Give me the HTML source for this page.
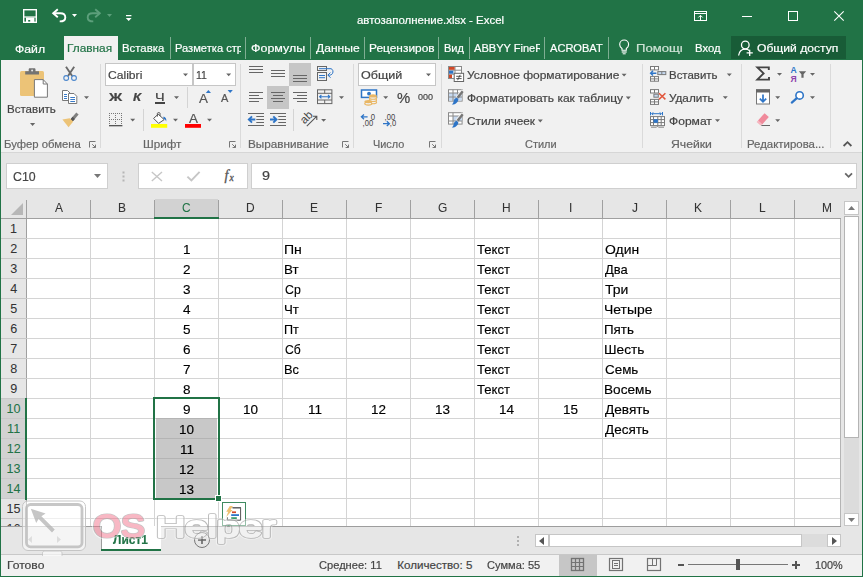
<!DOCTYPE html>
<html lang="ru"><head><meta charset="utf-8"><title>автозаполнение.xlsx - Excel</title><style>html,body{margin:0;padding:0}
body{width:863px;height:577px;overflow:hidden;position:relative;background:#fff;font-family:"Liberation Sans",sans-serif}
.a{position:absolute;display:block}
.t{position:absolute;white-space:nowrap;transform-origin:0 0;-webkit-text-stroke:0.2px}
</style></head><body>
<div class="a" style="left:0px;top:0px;width:863px;height:60px;background:#217346;"></div>
<span class="t" style="left:356.84px;top:13.98px;font-size:11.6px;line-height:11.6px;color:#fff;transform:scaleX(0.9883);">автозаполнение.xlsx - Excel</span>
<div class="a" style="left:64px;top:36px;width:54px;height:24px;background:#f1f1f1;"></div>
<span class="t" style="left:15.43px;top:42.98px;font-size:11.6px;line-height:11.6px;color:#fff;transform:scaleX(1.0559);">Файл</span>
<span class="t" style="left:67.25px;top:41.78px;font-size:11.6px;line-height:11.6px;color:#217346;transform:scaleX(1.0222);">Главная</span>
<span class="t" style="left:122.39px;top:41.78px;font-size:11.6px;line-height:11.6px;color:#fff;transform:scaleX(0.9795);">Вставка</span>
<div class="a" style="left:170px;top:38px;width:71px;height:20px;overflow:hidden">
<span class="t" style="left:4.51px;top:3.78px;font-size:11.6px;line-height:11.6px;color:#fff;transform:scaleX(0.9600);">Разметка страницы</span>
</div>
<span class="t" style="left:251.11px;top:41.78px;font-size:11.6px;line-height:11.6px;color:#fff;transform:scaleX(1.0740);">Формулы</span>
<span class="t" style="left:315.94px;top:41.78px;font-size:11.6px;line-height:11.6px;color:#fff;transform:scaleX(1.0413);">Данные</span>
<span class="t" style="left:368.75px;top:41.78px;font-size:11.6px;line-height:11.6px;color:#fff;transform:scaleX(1.0268);">Рецензиров</span>
<span class="t" style="left:443.72px;top:41.78px;font-size:11.6px;line-height:11.6px;color:#fff;transform:scaleX(0.9528);">Вид</span>
<div class="a" style="left:470px;top:38px;width:70.3px;height:20px;overflow:hidden">
<span class="t" style="left:4.20px;top:3.78px;font-size:11.6px;line-height:11.6px;color:#fff;transform:scaleX(0.9538);">ABBYY FineReader</span>
</div>
<span class="t" style="left:550.00px;top:41.78px;font-size:11.6px;line-height:11.6px;color:#fff;transform:scaleX(0.9548);">ACROBAT</span>
<div class="a" style="left:630px;top:38px;width:52.3px;height:20px;overflow:hidden">
<span class="t" style="left:6.05px;top:3.78px;font-size:11.6px;line-height:11.6px;color:#cfe3d6;transform:scaleX(1.1281);">Помощник</span>
</div>
<span class="t" style="left:695.29px;top:41.78px;font-size:11.6px;line-height:11.6px;color:#fff;transform:scaleX(0.9756);">Вход</span>
<div class="a" style="left:731px;top:36px;width:115px;height:23px;background:#185c37;"></div>
<span class="t" style="left:757.15px;top:41.78px;font-size:11.6px;line-height:11.6px;color:#fff;transform:scaleX(1.0441);">Общий доступ</span>
<div class="a" style="left:170px;top:37px;width:1px;height:22px;background:#7fae93;"></div>
<div class="a" style="left:245px;top:37px;width:1px;height:22px;background:#7fae93;"></div>
<div class="a" style="left:310px;top:37px;width:1px;height:22px;background:#7fae93;"></div>
<div class="a" style="left:364px;top:37px;width:1px;height:22px;background:#7fae93;"></div>
<div class="a" style="left:438px;top:37px;width:1px;height:22px;background:#7fae93;"></div>
<div class="a" style="left:469px;top:37px;width:1px;height:22px;background:#7fae93;"></div>
<div class="a" style="left:544px;top:37px;width:1px;height:22px;background:#7fae93;"></div>
<div class="a" style="left:608px;top:37px;width:1px;height:22px;background:#7fae93;"></div>
<div class="a" style="left:1px;top:60px;width:861px;height:92px;background:#f1f1f1;"></div>
<div class="a" style="left:1px;top:152px;width:861px;height:1px;background:#d6d6d6;"></div>
<div class="a" style="left:1px;top:153px;width:861px;height:45px;background:#e6e6e6;"></div>
<div class="a" style="left:100px;top:64px;width:1px;height:84px;background:#dadada;"></div>
<div class="a" style="left:240px;top:64px;width:1px;height:84px;background:#dadada;"></div>
<div class="a" style="left:353px;top:64px;width:1px;height:84px;background:#dadada;"></div>
<div class="a" style="left:441px;top:64px;width:1px;height:84px;background:#dadada;"></div>
<div class="a" style="left:642px;top:64px;width:1px;height:84px;background:#dadada;"></div>
<div class="a" style="left:741px;top:64px;width:1px;height:84px;background:#dadada;"></div>
<div class="a" style="left:830px;top:64px;width:1px;height:84px;background:#dadada;"></div>
<div class="a" style="left:187px;top:87px;width:1px;height:21px;background:#d4d4d4;"></div>
<div class="a" style="left:143px;top:109px;width:1px;height:22px;background:#d4d4d4;"></div>
<div class="a" style="left:293px;top:109px;width:1px;height:22px;background:#d4d4d4;"></div>
<span class="t" style="left:3.59px;top:138.48px;font-size:11.6px;line-height:11.6px;color:#666;transform:scaleX(0.9757);">Буфер обмена</span>
<span class="t" style="left:142.76px;top:138.48px;font-size:11.6px;line-height:11.6px;color:#666;transform:scaleX(1.0080);">Шрифт</span>
<span class="t" style="left:248.26px;top:138.48px;font-size:11.6px;line-height:11.6px;color:#666;transform:scaleX(1.0120);">Выравнивание</span>
<span class="t" style="left:373.13px;top:138.48px;font-size:11.6px;line-height:11.6px;color:#666;transform:scaleX(0.9387);">Число</span>
<span class="t" style="left:525.15px;top:138.48px;font-size:11.6px;line-height:11.6px;color:#666;transform:scaleX(0.9464);">Стили</span>
<span class="t" style="left:671.39px;top:138.48px;font-size:11.6px;line-height:11.6px;color:#666;transform:scaleX(1.0526);">Ячейки</span>
<span class="t" style="left:746.59px;top:138.48px;font-size:11.6px;line-height:11.6px;color:#666;transform:scaleX(0.9847);">Редактирова...</span>
<span class="t" style="left:7.08px;top:103.18px;font-size:11.6px;line-height:11.6px;color:#444;transform:scaleX(0.9939);">Вставить</span>
<div class="a" style="left:105px;top:63px;width:88px;height:23px;background:#fff;border:1px solid #c6c6c6;box-sizing:border-box;"></div>
<div class="a" style="left:193px;top:63px;width:43px;height:23px;background:#fff;border:1px solid #c6c6c6;box-sizing:border-box;"></div>
<span class="t" style="left:107.89px;top:68.98px;font-size:11.6px;line-height:11.6px;color:#444;transform:scaleX(1.0446);">Calibri</span>
<span class="t" style="left:196.21px;top:68.98px;font-size:11.6px;line-height:11.6px;color:#444;transform:scaleX(0.9045);">11</span>
<div class="a" style="left:358px;top:63px;width:78px;height:23px;background:#fff;border:1px solid #c6c6c6;box-sizing:border-box;"></div>
<span class="t" style="left:361.23px;top:69.08px;font-size:11.6px;line-height:11.6px;color:#444;transform:scaleX(1.0834);">Общий</span>
<div class="a" style="left:289px;top:63px;width:22px;height:23px;background:#c6c6c6;"></div>
<div class="a" style="left:267px;top:86px;width:22px;height:23px;background:#c6c6c6;"></div>
<span class="t" style="left:467.14px;top:68.98px;font-size:11.6px;line-height:11.6px;color:#444;transform:scaleX(1.0328);">Условное форматирование</span>
<span class="t" style="left:466.84px;top:91.68px;font-size:11.6px;line-height:11.6px;color:#444;transform:scaleX(1.0347);">Форматировать как таблицу</span>
<span class="t" style="left:466.91px;top:114.78px;font-size:11.6px;line-height:11.6px;color:#444;transform:scaleX(1.0164);">Стили ячеек</span>
<span class="t" style="left:668.68px;top:68.88px;font-size:11.6px;line-height:11.6px;color:#444;transform:scaleX(0.9876);">Вставить</span>
<span class="t" style="left:668.65px;top:91.78px;font-size:11.6px;line-height:11.6px;color:#444;transform:scaleX(1.0105);">Удалить</span>
<span class="t" style="left:668.94px;top:114.68px;font-size:11.6px;line-height:11.6px;color:#444;transform:scaleX(1.0404);">Формат</span>
<span class="t" style="left:109.30px;top:90.88px;font-size:11.6px;line-height:11.6px;color:#444;transform:scaleX(1.2599);font-weight:bold;">Ж</span>
<span class="t" style="left:132.54px;top:90.88px;font-size:11.6px;line-height:11.6px;color:#444;transform:scaleX(1.1406);font-weight:bold;font-style:italic;">К</span>
<span class="t" style="left:155.14px;top:90.58px;font-size:11.6px;line-height:11.6px;color:#444;transform:scaleX(1.2462);">Ч</span>
<div class="a" style="left:155px;top:102px;width:10px;height:1.5px;background:#444;"></div>
<span class="t" style="left:198.50px;top:91.50px;font-size:13px;line-height:13px;color:#555;transform:scaleX(1.0295);">A</span>
<span class="t" style="left:221.20px;top:94.03px;font-size:10px;line-height:10px;color:#555;transform:scaleX(1.0977);">A</span>
<span class="t" style="left:188.80px;top:112.72px;font-size:12.5px;line-height:12.5px;color:#555;transform:scaleX(1.0707);">A</span>
<span class="t" style="left:396.78px;top:90.00px;font-size:15px;line-height:15px;color:#444;transform:scaleX(0.9919);">%</span>
<span class="t" style="left:417.54px;top:91.67px;font-size:9.6px;line-height:9.6px;color:#444;transform:scaleX(0.9368);">000</span>
<div class="a" style="left:6px;top:163px;width:102px;height:26px;background:#fff;border:1px solid #cfcfcf;box-sizing:border-box;"></div>
<div class="a" style="left:138px;top:163px;width:110px;height:26px;background:#fff;border:1px solid #cfcfcf;box-sizing:border-box;"></div>
<div class="a" style="left:251px;top:163px;width:606px;height:26px;background:#fff;border:1px solid #cfcfcf;box-sizing:border-box;"></div>
<span class="t" style="left:12.58px;top:170.00px;font-size:13px;line-height:13px;color:#444;transform:scaleX(0.9495);">C10</span>
<span class="t" style="left:262.45px;top:169.92px;font-size:12.5px;line-height:12.5px;color:#444;transform:scaleX(1.1527);">9</span>
<svg class="a" style="left:94px;top:173.5px;" width="7" height="4" viewBox="0 0 7 4"><path d="M0 0H7 L3.5 4 Z" fill="#777"/></svg>
<div class="a" style="left:1px;top:198px;width:842px;height:21px;background:#e6e6e6;"></div>
<div class="a" style="left:27px;top:219px;width:814px;height:307px;background:#fff;"></div>
<div class="a" style="left:1px;top:219px;width:25px;height:307px;background:#e6e6e6;"></div>
<div class="a" style="left:155px;top:199px;width:63px;height:18px;background:#d2d2d2;"></div>
<div class="a" style="left:1px;top:399px;width:24px;height:100px;background:#d2d2d2;"></div>
<div class="a" style="left:26px;top:219px;width:1px;height:307px;background:#a0a0a0;"></div>
<div class="a" style="left:26px;top:200px;width:1px;height:18px;background:#a0a0a0;"></div>
<div class="a" style="left:90px;top:219px;width:1px;height:307px;background:#d4d4d4;"></div>
<div class="a" style="left:90px;top:200px;width:1px;height:18px;background:#a0a0a0;"></div>
<div class="a" style="left:154px;top:219px;width:1px;height:307px;background:#d4d4d4;"></div>
<div class="a" style="left:154px;top:200px;width:1px;height:18px;background:#a0a0a0;"></div>
<div class="a" style="left:218px;top:219px;width:1px;height:307px;background:#d4d4d4;"></div>
<div class="a" style="left:218px;top:200px;width:1px;height:18px;background:#a0a0a0;"></div>
<div class="a" style="left:282px;top:219px;width:1px;height:307px;background:#d4d4d4;"></div>
<div class="a" style="left:282px;top:200px;width:1px;height:18px;background:#a0a0a0;"></div>
<div class="a" style="left:346px;top:219px;width:1px;height:307px;background:#d4d4d4;"></div>
<div class="a" style="left:346px;top:200px;width:1px;height:18px;background:#a0a0a0;"></div>
<div class="a" style="left:410px;top:219px;width:1px;height:307px;background:#d4d4d4;"></div>
<div class="a" style="left:410px;top:200px;width:1px;height:18px;background:#a0a0a0;"></div>
<div class="a" style="left:474px;top:219px;width:1px;height:307px;background:#d4d4d4;"></div>
<div class="a" style="left:474px;top:200px;width:1px;height:18px;background:#a0a0a0;"></div>
<div class="a" style="left:538px;top:219px;width:1px;height:307px;background:#d4d4d4;"></div>
<div class="a" style="left:538px;top:200px;width:1px;height:18px;background:#a0a0a0;"></div>
<div class="a" style="left:602px;top:219px;width:1px;height:307px;background:#d4d4d4;"></div>
<div class="a" style="left:602px;top:200px;width:1px;height:18px;background:#a0a0a0;"></div>
<div class="a" style="left:666px;top:219px;width:1px;height:307px;background:#d4d4d4;"></div>
<div class="a" style="left:666px;top:200px;width:1px;height:18px;background:#a0a0a0;"></div>
<div class="a" style="left:730px;top:219px;width:1px;height:307px;background:#d4d4d4;"></div>
<div class="a" style="left:730px;top:200px;width:1px;height:18px;background:#a0a0a0;"></div>
<div class="a" style="left:794px;top:219px;width:1px;height:307px;background:#d4d4d4;"></div>
<div class="a" style="left:794px;top:200px;width:1px;height:18px;background:#a0a0a0;"></div>
<div class="a" style="left:1px;top:218px;width:840px;height:1px;background:#a0a0a0;"></div>
<div class="a" style="left:1px;top:238px;width:26px;height:1px;background:#c8c8c8;"></div>
<div class="a" style="left:27px;top:238px;width:814px;height:1px;background:#d4d4d4;"></div>
<div class="a" style="left:1px;top:258px;width:26px;height:1px;background:#c8c8c8;"></div>
<div class="a" style="left:27px;top:258px;width:814px;height:1px;background:#d4d4d4;"></div>
<div class="a" style="left:1px;top:278px;width:26px;height:1px;background:#c8c8c8;"></div>
<div class="a" style="left:27px;top:278px;width:814px;height:1px;background:#d4d4d4;"></div>
<div class="a" style="left:1px;top:298px;width:26px;height:1px;background:#c8c8c8;"></div>
<div class="a" style="left:27px;top:298px;width:814px;height:1px;background:#d4d4d4;"></div>
<div class="a" style="left:1px;top:318px;width:26px;height:1px;background:#c8c8c8;"></div>
<div class="a" style="left:27px;top:318px;width:814px;height:1px;background:#d4d4d4;"></div>
<div class="a" style="left:1px;top:338px;width:26px;height:1px;background:#c8c8c8;"></div>
<div class="a" style="left:27px;top:338px;width:814px;height:1px;background:#d4d4d4;"></div>
<div class="a" style="left:1px;top:358px;width:26px;height:1px;background:#c8c8c8;"></div>
<div class="a" style="left:27px;top:358px;width:814px;height:1px;background:#d4d4d4;"></div>
<div class="a" style="left:1px;top:378px;width:26px;height:1px;background:#c8c8c8;"></div>
<div class="a" style="left:27px;top:378px;width:814px;height:1px;background:#d4d4d4;"></div>
<div class="a" style="left:1px;top:398px;width:26px;height:1px;background:#c8c8c8;"></div>
<div class="a" style="left:27px;top:398px;width:814px;height:1px;background:#d4d4d4;"></div>
<div class="a" style="left:1px;top:418px;width:26px;height:1px;background:#c8c8c8;"></div>
<div class="a" style="left:27px;top:418px;width:814px;height:1px;background:#d4d4d4;"></div>
<div class="a" style="left:1px;top:438px;width:26px;height:1px;background:#c8c8c8;"></div>
<div class="a" style="left:27px;top:438px;width:814px;height:1px;background:#d4d4d4;"></div>
<div class="a" style="left:1px;top:458px;width:26px;height:1px;background:#c8c8c8;"></div>
<div class="a" style="left:27px;top:458px;width:814px;height:1px;background:#d4d4d4;"></div>
<div class="a" style="left:1px;top:478px;width:26px;height:1px;background:#c8c8c8;"></div>
<div class="a" style="left:27px;top:478px;width:814px;height:1px;background:#d4d4d4;"></div>
<div class="a" style="left:1px;top:498px;width:26px;height:1px;background:#c8c8c8;"></div>
<div class="a" style="left:27px;top:498px;width:814px;height:1px;background:#d4d4d4;"></div>
<div class="a" style="left:1px;top:518px;width:26px;height:1px;background:#c8c8c8;"></div>
<div class="a" style="left:27px;top:518px;width:814px;height:1px;background:#d4d4d4;"></div>
<div class="a" style="left:25px;top:398px;width:2px;height:102px;background:#217346;"></div>
<div class="a" style="left:154px;top:217px;width:65px;height:2px;background:#217346;"></div>
<span class="t" style="left:54.52px;top:202.33px;font-size:12.6px;line-height:12.6px;color:#333;transform:scaleX(0.9500);-webkit-text-stroke:0.05px;">A</span>
<span class="t" style="left:118.34px;top:202.33px;font-size:12.6px;line-height:12.6px;color:#333;transform:scaleX(0.9500);-webkit-text-stroke:0.05px;">B</span>
<span class="t" style="left:182.10px;top:202.33px;font-size:12.6px;line-height:12.6px;color:#217346;transform:scaleX(0.9500);-webkit-text-stroke:0.05px;">C</span>
<span class="t" style="left:245.98px;top:202.33px;font-size:12.6px;line-height:12.6px;color:#333;transform:scaleX(0.9500);-webkit-text-stroke:0.05px;">D</span>
<span class="t" style="left:310.28px;top:202.33px;font-size:12.6px;line-height:12.6px;color:#333;transform:scaleX(0.9500);-webkit-text-stroke:0.05px;">E</span>
<span class="t" style="left:374.61px;top:202.33px;font-size:12.6px;line-height:12.6px;color:#333;transform:scaleX(0.9500);-webkit-text-stroke:0.05px;">F</span>
<span class="t" style="left:437.98px;top:202.33px;font-size:12.6px;line-height:12.6px;color:#333;transform:scaleX(0.9500);-webkit-text-stroke:0.05px;">G</span>
<span class="t" style="left:502.19px;top:202.33px;font-size:12.6px;line-height:12.6px;color:#333;transform:scaleX(0.9500);-webkit-text-stroke:0.05px;">H</span>
<span class="t" style="left:568.85px;top:202.33px;font-size:12.6px;line-height:12.6px;color:#333;transform:scaleX(0.9500);-webkit-text-stroke:0.05px;">I</span>
<span class="t" style="left:631.87px;top:202.33px;font-size:12.6px;line-height:12.6px;color:#333;transform:scaleX(0.9500);-webkit-text-stroke:0.05px;">J</span>
<span class="t" style="left:694.10px;top:202.33px;font-size:12.6px;line-height:12.6px;color:#333;transform:scaleX(0.9500);-webkit-text-stroke:0.05px;">K</span>
<span class="t" style="left:758.88px;top:202.33px;font-size:12.6px;line-height:12.6px;color:#333;transform:scaleX(0.9500);-webkit-text-stroke:0.05px;">L</span>
<span class="t" style="left:822.03px;top:202.33px;font-size:12.6px;line-height:12.6px;color:#333;transform:scaleX(0.9500);-webkit-text-stroke:0.05px;">M</span>
<div class="a" style="left:0;top:219px;width:27px;height:307px;overflow:hidden">
<span class="t" style="left:10.11px;top:4.03px;font-size:12.6px;line-height:12.6px;color:#333;-webkit-text-stroke:0.05px;">1</span>
<span class="t" style="left:10.30px;top:24.03px;font-size:12.6px;line-height:12.6px;color:#333;-webkit-text-stroke:0.05px;">2</span>
<span class="t" style="left:10.30px;top:44.03px;font-size:12.6px;line-height:12.6px;color:#333;-webkit-text-stroke:0.05px;">3</span>
<span class="t" style="left:10.37px;top:64.03px;font-size:12.6px;line-height:12.6px;color:#333;-webkit-text-stroke:0.05px;">4</span>
<span class="t" style="left:10.30px;top:84.03px;font-size:12.6px;line-height:12.6px;color:#333;-webkit-text-stroke:0.05px;">5</span>
<span class="t" style="left:10.24px;top:104.03px;font-size:12.6px;line-height:12.6px;color:#333;-webkit-text-stroke:0.05px;">6</span>
<span class="t" style="left:10.30px;top:124.03px;font-size:12.6px;line-height:12.6px;color:#333;-webkit-text-stroke:0.05px;">7</span>
<span class="t" style="left:10.27px;top:144.03px;font-size:12.6px;line-height:12.6px;color:#333;-webkit-text-stroke:0.05px;">8</span>
<span class="t" style="left:10.30px;top:164.03px;font-size:12.6px;line-height:12.6px;color:#333;-webkit-text-stroke:0.05px;">9</span>
<span class="t" style="left:6.56px;top:184.03px;font-size:12.6px;line-height:12.6px;color:#217346;-webkit-text-stroke:0.05px;">10</span>
<span class="t" style="left:7.09px;top:204.03px;font-size:12.6px;line-height:12.6px;color:#217346;-webkit-text-stroke:0.05px;">11</span>
<span class="t" style="left:6.65px;top:224.03px;font-size:12.6px;line-height:12.6px;color:#217346;-webkit-text-stroke:0.05px;">12</span>
<span class="t" style="left:6.59px;top:244.03px;font-size:12.6px;line-height:12.6px;color:#217346;-webkit-text-stroke:0.05px;">13</span>
<span class="t" style="left:6.52px;top:264.03px;font-size:12.6px;line-height:12.6px;color:#217346;-webkit-text-stroke:0.05px;">14</span>
<span class="t" style="left:6.59px;top:284.03px;font-size:12.6px;line-height:12.6px;color:#333;-webkit-text-stroke:0.05px;">15</span>
<span class="t" style="left:6.59px;top:304.03px;font-size:12.6px;line-height:12.6px;color:#333;-webkit-text-stroke:0.05px;">16</span>
</div>
<svg class="a" style="left:11px;top:203px;" width="12" height="12" viewBox="0 0 12 12"><path d="M12 0V12H0Z" fill="#b7b7b7"/></svg>
<div class="a" style="left:156px;top:419px;width:61px;height:79px;background:#c8c8c8;"></div>
<div class="a" style="left:156px;top:418px;width:61px;height:1px;background:#b4b4b4;"></div>
<div class="a" style="left:156px;top:438px;width:61px;height:1px;background:#b4b4b4;"></div>
<div class="a" style="left:156px;top:458px;width:61px;height:1px;background:#b4b4b4;"></div>
<div class="a" style="left:156px;top:478px;width:61px;height:1px;background:#b4b4b4;"></div>
<div class="a" style="left:153px;top:397px;width:67px;height:103px;border:2px solid #217346;box-sizing:border-box;"></div>
<div class="a" style="left:215px;top:495px;width:7px;height:7px;background:#fff;"></div>
<div class="a" style="left:216px;top:496px;width:5px;height:5px;background:#217346;"></div>
<span class="t" style="left:182.75px;top:242.70px;font-size:13px;line-height:13px;color:#000;transform:scaleX(1.0400);-webkit-text-stroke:0.15px #000;">1</span>
<span class="t" style="left:182.95px;top:262.70px;font-size:13px;line-height:13px;color:#000;transform:scaleX(1.0400);-webkit-text-stroke:0.15px #000;">2</span>
<span class="t" style="left:182.95px;top:282.70px;font-size:13px;line-height:13px;color:#000;transform:scaleX(1.0400);-webkit-text-stroke:0.15px #000;">3</span>
<span class="t" style="left:183.02px;top:302.70px;font-size:13px;line-height:13px;color:#000;transform:scaleX(1.0400);-webkit-text-stroke:0.15px #000;">4</span>
<span class="t" style="left:182.95px;top:322.70px;font-size:13px;line-height:13px;color:#000;transform:scaleX(1.0400);-webkit-text-stroke:0.15px #000;">5</span>
<span class="t" style="left:182.88px;top:342.70px;font-size:13px;line-height:13px;color:#000;transform:scaleX(1.0400);-webkit-text-stroke:0.15px #000;">6</span>
<span class="t" style="left:182.95px;top:362.70px;font-size:13px;line-height:13px;color:#000;transform:scaleX(1.0400);-webkit-text-stroke:0.15px #000;">7</span>
<span class="t" style="left:182.91px;top:382.70px;font-size:13px;line-height:13px;color:#000;transform:scaleX(1.0400);-webkit-text-stroke:0.15px #000;">8</span>
<span class="t" style="left:182.95px;top:402.70px;font-size:13px;line-height:13px;color:#000;transform:scaleX(1.0400);-webkit-text-stroke:0.15px #000;">9</span>
<span class="t" style="left:178.93px;top:422.70px;font-size:13px;line-height:13px;color:#000;transform:scaleX(1.0400);-webkit-text-stroke:0.15px #000;">10</span>
<span class="t" style="left:179.50px;top:442.70px;font-size:13px;line-height:13px;color:#000;transform:scaleX(1.0400);-webkit-text-stroke:0.15px #000;">11</span>
<span class="t" style="left:179.03px;top:462.70px;font-size:13px;line-height:13px;color:#000;transform:scaleX(1.0400);-webkit-text-stroke:0.15px #000;">12</span>
<span class="t" style="left:178.96px;top:482.70px;font-size:13px;line-height:13px;color:#000;transform:scaleX(1.0400);-webkit-text-stroke:0.15px #000;">13</span>
<span class="t" style="left:242.93px;top:402.70px;font-size:13px;line-height:13px;color:#000;transform:scaleX(1.0400);-webkit-text-stroke:0.15px #000;">10</span>
<span class="t" style="left:307.50px;top:402.70px;font-size:13px;line-height:13px;color:#000;transform:scaleX(1.0400);-webkit-text-stroke:0.15px #000;">11</span>
<span class="t" style="left:371.03px;top:402.70px;font-size:13px;line-height:13px;color:#000;transform:scaleX(1.0400);-webkit-text-stroke:0.15px #000;">12</span>
<span class="t" style="left:434.96px;top:402.70px;font-size:13px;line-height:13px;color:#000;transform:scaleX(1.0400);-webkit-text-stroke:0.15px #000;">13</span>
<span class="t" style="left:498.89px;top:402.70px;font-size:13px;line-height:13px;color:#000;transform:scaleX(1.0400);-webkit-text-stroke:0.15px #000;">14</span>
<span class="t" style="left:562.96px;top:402.70px;font-size:13px;line-height:13px;color:#000;transform:scaleX(1.0400);-webkit-text-stroke:0.15px #000;">15</span>
<span class="t" style="left:284.28px;top:242.70px;font-size:13px;line-height:13px;color:#000;transform:scaleX(1.0803);-webkit-text-stroke:0.15px #000;">Пн</span>
<span class="t" style="left:284.33px;top:262.70px;font-size:13px;line-height:13px;color:#000;transform:scaleX(1.0282);-webkit-text-stroke:0.15px #000;">Вт</span>
<span class="t" style="left:284.78px;top:282.70px;font-size:13px;line-height:13px;color:#000;transform:scaleX(0.9477);-webkit-text-stroke:0.15px #000;">Ср</span>
<span class="t" style="left:284.34px;top:302.70px;font-size:13px;line-height:13px;color:#000;transform:scaleX(1.0206);-webkit-text-stroke:0.15px #000;">Чт</span>
<span class="t" style="left:284.39px;top:322.70px;font-size:13px;line-height:13px;color:#000;transform:scaleX(0.9687);-webkit-text-stroke:0.15px #000;">Пт</span>
<span class="t" style="left:284.79px;top:342.70px;font-size:13px;line-height:13px;color:#000;transform:scaleX(0.9359);-webkit-text-stroke:0.15px #000;">Сб</span>
<span class="t" style="left:284.37px;top:362.70px;font-size:13px;line-height:13px;color:#000;transform:scaleX(0.9869);-webkit-text-stroke:0.15px #000;">Вс</span>
<span class="t" style="left:477.14px;top:242.70px;font-size:13px;line-height:13px;color:#000;transform:scaleX(1.0112);-webkit-text-stroke:0.15px #000;">Текст</span>
<span class="t" style="left:477.14px;top:262.70px;font-size:13px;line-height:13px;color:#000;transform:scaleX(1.0112);-webkit-text-stroke:0.15px #000;">Текст</span>
<span class="t" style="left:477.14px;top:282.70px;font-size:13px;line-height:13px;color:#000;transform:scaleX(1.0112);-webkit-text-stroke:0.15px #000;">Текст</span>
<span class="t" style="left:477.14px;top:302.70px;font-size:13px;line-height:13px;color:#000;transform:scaleX(1.0112);-webkit-text-stroke:0.15px #000;">Текст</span>
<span class="t" style="left:477.14px;top:322.70px;font-size:13px;line-height:13px;color:#000;transform:scaleX(1.0112);-webkit-text-stroke:0.15px #000;">Текст</span>
<span class="t" style="left:477.14px;top:342.70px;font-size:13px;line-height:13px;color:#000;transform:scaleX(1.0112);-webkit-text-stroke:0.15px #000;">Текст</span>
<span class="t" style="left:477.14px;top:362.70px;font-size:13px;line-height:13px;color:#000;transform:scaleX(1.0112);-webkit-text-stroke:0.15px #000;">Текст</span>
<span class="t" style="left:477.14px;top:382.70px;font-size:13px;line-height:13px;color:#000;transform:scaleX(1.0112);-webkit-text-stroke:0.15px #000;">Текст</span>
<span class="t" style="left:604.77px;top:242.70px;font-size:13px;line-height:13px;color:#000;transform:scaleX(1.0717);-webkit-text-stroke:0.15px #000;">Один</span>
<span class="t" style="left:605.34px;top:262.70px;font-size:13px;line-height:13px;color:#000;transform:scaleX(0.9963);-webkit-text-stroke:0.15px #000;">Два</span>
<span class="t" style="left:605.12px;top:282.70px;font-size:13px;line-height:13px;color:#000;transform:scaleX(1.0759);-webkit-text-stroke:0.15px #000;">Три</span>
<span class="t" style="left:604.29px;top:302.70px;font-size:13px;line-height:13px;color:#000;transform:scaleX(1.0700);-webkit-text-stroke:0.15px #000;">Четыре</span>
<span class="t" style="left:604.33px;top:322.70px;font-size:13px;line-height:13px;color:#000;transform:scaleX(1.0269);-webkit-text-stroke:0.15px #000;">Пять</span>
<span class="t" style="left:604.30px;top:342.70px;font-size:13px;line-height:13px;color:#000;transform:scaleX(1.0546);-webkit-text-stroke:0.15px #000;">Шесть</span>
<span class="t" style="left:604.73px;top:362.70px;font-size:13px;line-height:13px;color:#000;transform:scaleX(1.0310);-webkit-text-stroke:0.15px #000;">Семь</span>
<span class="t" style="left:604.31px;top:382.70px;font-size:13px;line-height:13px;color:#000;transform:scaleX(1.0470);-webkit-text-stroke:0.15px #000;">Восемь</span>
<span class="t" style="left:605.33px;top:402.70px;font-size:13px;line-height:13px;color:#000;transform:scaleX(1.0503);-webkit-text-stroke:0.15px #000;">Девять</span>
<span class="t" style="left:605.33px;top:422.70px;font-size:13px;line-height:13px;color:#000;transform:scaleX(1.0376);-webkit-text-stroke:0.15px #000;">Десять</span>
<div class="a" style="left:841px;top:198px;width:21px;height:329px;background:#e6e6e6;"></div>
<div class="a" style="left:844px;top:216px;width:15px;height:297px;background:#dcdcdc;"></div>
<div class="a" style="left:844px;top:201px;width:15px;height:14px;background:#fff;border:1px solid #c6c6c6;box-sizing:border-box;"></div>
<div class="a" style="left:844px;top:513px;width:15px;height:13px;background:#fff;border:1px solid #c6c6c6;box-sizing:border-box;"></div>
<div class="a" style="left:844px;top:216px;width:15px;height:222px;background:#fff;border:1px solid #b4b4b4;box-sizing:border-box;"></div>
<svg class="a" style="left:848px;top:206px;" width="7" height="4" viewBox="0 0 7 4"><path d="M0 4H7L3.5 0Z" fill="#777"/></svg>
<svg class="a" style="left:848px;top:518px;" width="7" height="4" viewBox="0 0 7 4"><path d="M0 0H7L3.5 4Z" fill="#777"/></svg>
<div class="a" style="left:840px;top:219px;width:1px;height:307px;background:#b4b4b4;"></div>
<div class="a" style="left:1px;top:526px;width:861px;height:28px;background:#e6e6e6;"></div>
<div class="a" style="left:1px;top:526px;width:840px;height:1px;background:#9d9d9d;"></div>
<div class="a" style="left:102px;top:526px;width:59px;height:23px;background:#fff;"></div>
<div class="a" style="left:101px;top:526px;width:1px;height:23px;background:#9d9d9d;"></div>
<div class="a" style="left:101px;top:549px;width:60px;height:2px;background:#217346;"></div>
<span class="t" style="left:113.04px;top:532.80px;font-size:13px;line-height:13px;color:#217346;transform:scaleX(0.9199);font-weight:bold;">Лист1</span>
<div class="a" style="left:535px;top:534px;width:14px;height:13px;background:#fff;border:1px solid #c6c6c6;box-sizing:border-box;"></div>
<div class="a" style="left:827px;top:534px;width:14px;height:13px;background:#fff;border:1px solid #c6c6c6;box-sizing:border-box;"></div>
<div class="a" style="left:802px;top:534px;width:25px;height:13px;background:#dcdcdc;"></div>
<div class="a" style="left:549px;top:534px;width:253px;height:13px;background:#fff;border:1px solid #c6c6c6;box-sizing:border-box;"></div>
<svg class="a" style="left:539px;top:537px;" width="5" height="8" viewBox="0 0 5 8"><path d="M5 0V8L0 4Z" fill="#555"/></svg>
<svg class="a" style="left:832px;top:537px;" width="5" height="8" viewBox="0 0 5 8"><path d="M0 0V8L5 4Z" fill="#555"/></svg>
<div class="a" style="left:517px;top:536px;width:2px;height:2px;background:#b0b0b0;"></div>
<div class="a" style="left:517px;top:540px;width:2px;height:2px;background:#b0b0b0;"></div>
<div class="a" style="left:517px;top:544px;width:2px;height:2px;background:#b0b0b0;"></div>
<svg class="a" style="left:193px;top:531px;" width="18" height="18" viewBox="0 0 18 18"><circle cx="9" cy="9" r="7.5" fill="none" stroke="#777" stroke-width="1"/><path d="M9 5V13M5 9H13" stroke="#666" stroke-width="1.6"/></svg>
<div class="a" style="left:1px;top:555px;width:861px;height:21px;background:#f1f1f1;"></div>
<div class="a" style="left:1px;top:554px;width:861px;height:1px;background:#c8c8c8;"></div>
<span class="t" style="left:7.43px;top:558.88px;font-size:11.6px;line-height:11.6px;color:#444;transform:scaleX(1.0438);">Готово</span>
<span class="t" style="left:319.04px;top:558.88px;font-size:11.6px;line-height:11.6px;color:#444;transform:scaleX(0.9582);">Среднее: 11</span>
<span class="t" style="left:397.27px;top:558.88px;font-size:11.6px;line-height:11.6px;color:#444;">Количество: 5</span>
<span class="t" style="left:487.45px;top:558.88px;font-size:11.6px;line-height:11.6px;color:#444;transform:scaleX(0.9552);">Сумма: 55</span>
<span class="t" style="left:815.19px;top:558.88px;font-size:11.6px;line-height:11.6px;color:#444;transform:scaleX(0.9360);">100%</span>
<div class="a" style="left:559px;top:555px;width:38px;height:21px;background:#c6c6c6;"></div>
<div class="a" style="left:688px;top:564px;width:100px;height:1px;background:#777;"></div>
<div class="a" style="left:736px;top:558.5px;width:4px;height:11px;background:#555;"></div>
<div class="a" style="left:678px;top:564px;width:6px;height:2px;background:#555;"></div>
<div class="a" style="left:792px;top:564px;width:8px;height:2px;background:#555;"></div>
<div class="a" style="left:795px;top:561px;width:2px;height:8px;background:#555;"></div>
<div class="a" style="left:0px;top:0px;width:1px;height:577px;background:#217346;"></div>
<div class="a" style="left:862px;top:0px;width:1px;height:577px;background:#217346;"></div>
<div class="a" style="left:0px;top:576px;width:863px;height:1px;background:#217346;"></div>
<svg class="a" style="left:0;top:0" width="863" height="577" viewBox="0 0 863 577">
<!-- title bar: save -->
<g fill="none" stroke="#fff">
<rect x="23.7" y="9.7" width="12.6" height="12.6" stroke-width="1.4"/>
<path d="M24 17H36" stroke-width="1.2"/>
</g>
<path d="M26 17.6H34.4V22H30.2V20H28.2V22H26Z" fill="#fff"/>
<!-- undo -->
<g fill="none" stroke="#fff" stroke-width="1.9">
<path d="M53.5 13.2H60.3c3.2 0 5 1.9 5 4.2s-2 4-5.6 4"/>
<path d="M57.8 9.2L53.2 13.2L57.8 17.2"/>
</g>
<path d="M72 14H77L74.5 17Z" fill="#fff"/>
<!-- redo (disabled) -->
<g fill="none" stroke="#5c9f7b" stroke-width="1.9">
<path d="M99.5 13.2H92.7c-3.2 0-5 1.9-5 4.2s2 4 5.6 4"/>
<path d="M95.2 9.2L99.8 13.2L95.2 17.2"/>
</g>
<path d="M107 14H112L109.5 17Z" fill="#5c9f7b"/>
<!-- customize QAT -->
<path d="M126 15H131.4V16.3H126Z M125.8 17.9H131.6L128.7 21Z" fill="#fff"/>
<!-- ribbon display options -->
<g fill="none" stroke="#fff" stroke-width="1">
<rect x="694.5" y="11.5" width="12" height="9"/>
<path d="M694.5 13.5H706.5"/>
<path d="M700.5 20.5V15.5M698.3 17.5L700.5 15.3L702.7 17.5"/>
</g>
<!-- minimize / maximize / close -->
<path d="M742 16.5H752" stroke="#fff" stroke-width="1"/>
<rect x="788.5" y="11.5" width="9" height="9" fill="none" stroke="#fff" stroke-width="1"/>
<path d="M834.3 11.3L843.7 20.7M843.7 11.3L834.3 20.7" stroke="#fff" stroke-width="1.1"/>
<!-- lightbulb -->
<g fill="none" stroke="#fff" stroke-width="1.1">
<path d="M622 50.3V48.5c-1.4-0.9-2.3-2.3-2.3-4a4.45 4.45 0 0 1 8.9 0c0 1.7-0.9 3.1-2.3 4V50.3Z"/>
<path d="M621.7 52H626.7" stroke-width="1.2"/><path d="M622.7 53.8H625.7" stroke-width="1"/>
</g>
<!-- share person -->
<g fill="none" stroke="#fff" stroke-width="1.3">
<circle cx="745.3" cy="45" r="3.8"/>
<path d="M738.6 55.5c0.6-4 3.2-6.3 6.7-6.3 1.6 0 3 0.5 4 1.4"/>
<path d="M749.7 49.7V56M746.6 52.9H752.8"/>
</g>
<!-- ===== clipboard group ===== -->
<!-- paste -->
<rect x="20" y="71" width="24" height="25" rx="1.5" fill="#ecc377"/>
<path d="M25.2 74.6V71.2H28.7V69.3c0-0.7 0.5-1.1 1.1-1.1H34.4c0.6 0 1.1 0.4 1.1 1.1V71.2H39V74.6Z" fill="#737373"/>
<circle cx="32.1" cy="70.6" r="1" fill="#e6e6e6"/>
<path d="M34.4 79.6H43.2L47.4 84V97.2H34.4Z" fill="#fff" stroke="#787878" stroke-width="1"/>
<path d="M43.2 79.6V84H47.4" fill="none" stroke="#787878" stroke-width="1"/>
<path d="M30 123H35.2L32.6 126Z" fill="#666"/>
<!-- cut -->
<g fill="none" stroke="#6a6a6a" stroke-width="1.9">
<path d="M66 66.8L72.2 76M74.2 66.8L68 76"/>
</g>
<g fill="none" stroke="#4a86cc" stroke-width="1.1">
<circle cx="66.2" cy="78" r="2.4"/>
<circle cx="74" cy="78" r="2.4"/>
</g>
<!-- copy -->
<g fill="#fff" stroke="#787878" stroke-width="1">
<path d="M62.5 90.5H67.5L70 93V100.5H62.5Z"/>
<path d="M68.5 93.5H74L76.8 96.3V103.5H68.5Z"/>
</g>
<g stroke="#3a7bc8" stroke-width="1">
<path d="M64 94.5H67M64 96.5H67M64 98.5H67"/>
<path d="M70.3 97.5H75M70.3 99.5H75M70.3 101.5H75"/>
</g>
<path d="M84 96.3H89L86.5 99.1Z" fill="#666"/>
<!-- format painter -->
<path d="M76.3 112.4L78.6 114.5L73.2 120.9L70.9 118.8Z" fill="#808080"/>
<path d="M72.6 116.8L74.9 118.9L72.6 121.6L70.3 119.5Z" fill="#555"/>
<path d="M69.6 118.2L73.2 121.6L68.6 127.2L62.4 119.5Z" fill="#ecc377"/>
<!-- ===== font group ===== -->
<path d="M183 73.5H188L185.5 76.3Z M226.2 73.5H231.2L228.7 76.3Z M174 96.2H179L176.5 99Z M130.2 118.8H135.2L132.7 121.6Z M173 118.8H178L175.5 121.6Z M207 118.8H212L209.5 121.6Z" fill="#666"/>
<!-- grow / shrink triangles -->
<path d="M205.8 93H211L208.4 90Z" fill="#2e75c7"/>
<path d="M227.6 90H232.8L230.2 93Z" fill="#2e75c7"/>
<!-- borders icon -->
<g stroke="#777" stroke-width="1" stroke-dasharray="1 1">
<path d="M109 113.5H122M109 119.5H122M109.5 113V125M115.5 113V125M121.5 113V125"/>
</g>
<path d="M109 125.7H122.4" stroke="#444" stroke-width="1.2"/>
<!-- fill bucket -->
<rect x="151" y="124" width="16.2" height="3.8" fill="#ffff00"/>
<path d="M158.2 114.2L164.2 119.6L158.6 123.4L153.6 118.4Z" fill="#fff" stroke="#555" stroke-width="1"/>
<path d="M157.4 116.6V113.3c0-1 2.6-1 2.6 0V116" fill="none" stroke="#555" stroke-width="1"/>
<path d="M163.6 116.4c2 0.6 3.2 2.4 2.6 5.2-0.8-1.8-1.6-2.6-3-3Z" fill="#2e75c7"/>
<!-- font color bar -->
<rect x="185" y="124" width="16" height="3.8" fill="#ff0000"/>
<!-- ===== alignment group ===== -->
<g stroke="#666" stroke-width="1">
<path d="M249 66.5H263M249 69.5H263M249 72.5H263"/>
<path d="M271 70.5H285M271 73.5H285M271 76.5H285"/>
<path d="M293 75.5H307M293 78.5H307M293 81.5H307"/>
<path d="M249 92.5H263M249 95.5H259M249 98.5H263M249 101.5H259"/>
<path d="M271 92.5H285M273 95.5H283M271 98.5H285M273 101.5H283"/>
<path d="M293 92.5H307M297 95.5H307M293 98.5H307M297 101.5H307"/>
<path d="M248 113.5H264M256.3 116.5H264M256.3 119.5H264M256.3 122.5H264M248 125.5H264"/>
<path d="M270 113.5H286M278.3 116.5H286M278.3 119.5H286M278.3 122.5H286M270 125.5H286"/>
</g>
<!-- indent arrows -->
<g fill="none" stroke="#2e75c7" stroke-width="1.9">
<path d="M249 119.5H255.3M252 116.3L248.8 119.5L252 122.7"/>
<path d="M270 119.5H276.3M273.3 116.3L276.5 119.5L273.3 122.7"/>
</g>
<!-- wrap text -->
<g fill="none" stroke="#666" stroke-width="1">
<rect x="317.5" y="66.5" width="9" height="4"/>
<rect x="317.5" y="72.5" width="9" height="8"/>
</g>
<g fill="none" stroke="#2e75c7" stroke-width="1">
<path d="M319 68.7H331"/>
<path d="M319 75.5H325M319 77.7H325"/>
<path d="M331 68.7c2 0.6 2.4 3 1.6 4.6-0.8 1.5-2.2 2-4.6 2"/>
<path d="M330.4 72.6L327.8 75.2L330.6 77.6"/>
</g>
<!-- merge & center -->
<g fill="none" stroke="#666" stroke-width="1">
<rect x="317.5" y="89.8" width="14.4" height="13.8"/>
<path d="M317.5 93.3H332M317.5 100H332M324.7 89.8V93.3M324.7 100V103.6"/>
</g>
<g fill="none" stroke="#2e75c7" stroke-width="1.1">
<path d="M319.6 96.7H329.8M321.4 95L319.6 96.7L321.4 98.4M328 95L329.8 96.7L328 98.4"/>
</g>
<path d="M339 96.2H344L341.5 99Z M321.1 119H326.1L323.6 121.8Z" fill="#666"/>
<!-- orientation arrow line -->
<path d="M306.8 126.2L316.4 116.6M313 116.3H316.8V120" fill="none" stroke="#555" stroke-width="1.1"/>
<text transform="translate(304.6 124.4) rotate(-45)" font-family="Liberation Sans, sans-serif" font-size="11.5" fill="#444">ab</text>
<!-- ===== number group ===== -->
<path d="M426 73.5H431L428.5 76.3Z M383.2 96.2H388.2L385.7 99Z" fill="#666"/>
<!-- accounting format: banknote + coins -->
<rect x="361.5" y="90" width="15" height="7.4" fill="#fff" stroke="#2e75c7" stroke-width="1.5"/>
<circle cx="369" cy="93.7" r="1.9" fill="#2e75c7"/>
<g fill="#f1f1f1" stroke="#e9b765" stroke-width="1.1">
<ellipse cx="373" cy="102.3" rx="3.6" ry="1.5"/>
<ellipse cx="373" cy="100" rx="3.6" ry="1.5"/>
<ellipse cx="373" cy="97.7" rx="3.6" ry="1.5"/>
<ellipse cx="368.3" cy="103.6" rx="3.6" ry="1.5"/>
</g>
<g fill="#e9b765">
<ellipse cx="373" cy="95.9" rx="3.9" ry="1.7"/>
<ellipse cx="368.3" cy="101.6" rx="3.9" ry="1.7"/>
</g>
<!-- increase / decrease decimal -->
<g fill="none" stroke="#2e75c7" stroke-width="1.3">
<path d="M361.4 116.8H367.6M364 114.4L361.4 116.8L364 119.2"/>
<path d="M383 123.7H389.4M386.8 121.3L389.4 123.7L386.8 126.1"/>
</g>
<g font-family="Liberation Sans, sans-serif" font-size="8.8" fill="#444">
<text transform="translate(370.7 119.6) scale(0.88 1)">0</text>
<text transform="translate(362.6 126) scale(0.86 1)">,00</text>
<text transform="translate(384.6 119.6) scale(0.86 1)">,00</text>
<text transform="translate(389.8 126) scale(0.86 1)">,0</text>
</g>
<!-- ===== styles group ===== -->
<path d="M621.6 73.8H626.6L624.1 76.6Z M625.8 96.6H630.8L628.3 99.4Z M537.8 119.6H542.8L540.3 122.4Z" fill="#666"/>
<!-- conditional formatting -->
<g fill="none" stroke="#8a8a8a" stroke-width="1">
<rect x="448.5" y="66.5" width="13" height="12" fill="#fff"/>
<path d="M455 66.5V73M448.5 70.2H461.5M448.5 74.2H454"/>
</g>
<rect x="449" y="67" width="5.6" height="2.8" fill="#d24726"/>
<rect x="449" y="70.7" width="4.4" height="3" fill="#2e75c7"/>
<rect x="449" y="74.7" width="3" height="3.3" fill="#d24726"/>
<rect x="454.2" y="73.3" width="9.4" height="8.2" fill="#fff" stroke="#666" stroke-width="1"/>
<path d="M456.2 76.3H461.6M456.2 78.6H461.6M460.2 74.8L457.6 80.2" stroke="#444" stroke-width="0.9" fill="none"/>
<!-- format as table -->
<rect x="448.5" y="89.7" width="13.6" height="11.4" fill="#fff" stroke="#8a8a8a" stroke-width="1"/>
<rect x="449" y="93" width="12.6" height="7.6" fill="#c6d9f0"/>
<path d="M448.5 93H462M448.5 97H462M453 89.7V101M457.5 89.7V101" stroke="#8a8a8a" stroke-width="1" fill="none"/>
<path d="M463.8 90.8L458 98.6L455.6 96.8L461.4 89.6Z" fill="#f1f1f1"/>
<path d="M463.6 92L458.6 98.6L456.6 97L461.8 90.4Z" fill="#767676"/>
<path d="M456.4 97.6L458.4 99.4c-0.4 3-3 5.2-6.6 5 1.8-1.4 1.6-2.6 2-4 0.4-1.6 2.6-2.6 4.6-2.8Z" fill="#2e75c7"/>
<!-- cell styles -->
<rect x="448.5" y="112.7" width="13.6" height="11.4" fill="#fff" stroke="#8a8a8a" stroke-width="1"/>
<rect x="453" y="116" width="9" height="5" fill="#c6d9f0"/>
<path d="M448.5 116H462M448.5 121H462M453 112.7V124" stroke="#8a8a8a" stroke-width="1" fill="none"/>
<path d="M463.8 113.8L458 121.6L455.6 119.8L461.4 112.6Z" fill="#f1f1f1"/>
<path d="M463.6 115L458.6 121.6L456.6 120L461.8 113.4Z" fill="#767676"/>
<path d="M456.4 120.6L458.4 122.4c-0.4 3-3 5.2-6.6 5 1.8-1.4 1.6-2.6 2-4 0.4-1.6 2.6-2.6 4.6-2.8Z" fill="#2e75c7"/>
<!-- ===== cells group ===== -->
<path d="M726.8 73.4H731.8L729.3 76.2Z M722.8 96.2H727.8L725.3 99Z M715 119.3H720L717.5 122.1Z" fill="#666"/>
<!-- insert -->
<g fill="#fff" stroke="#7a7a7a" stroke-width="1">
<rect x="650.5" y="66.5" width="8" height="3.4"/>
<path d="M654.5 66.5V69.9" fill="none"/>
<rect x="650.5" y="76.6" width="8" height="4.6"/>
<path d="M654.5 76.6V81.2M650.5 78.9H658.5" fill="none"/>
<rect x="657.8" y="71.6" width="8" height="3" fill="#c6d9f0"/>
<path d="M661.8 71.6V74.6" fill="none"/>
</g>
<path d="M650.6 73.2H656.4M653 70.8L650.6 73.2L653 75.6" fill="none" stroke="#2e75c7" stroke-width="1.4"/>
<!-- delete -->
<g fill="#fff" stroke="#7a7a7a" stroke-width="1">
<rect x="650.5" y="89.6" width="8" height="3.4"/>
<path d="M654.5 89.6V93" fill="none"/>
<rect x="650.5" y="99.4" width="8" height="5"/>
<path d="M654.5 99.4V104.4M650.5 101.9H658.5" fill="none"/>
<rect x="653.9" y="94.2" width="4.4" height="3" fill="#c6d9f0"/>
</g>
<path d="M659 93.2L665.4 99.4M665.4 93.2L659 99.4" fill="none" stroke="#e2583e" stroke-width="1.5"/>
<!-- format -->
<g fill="none" stroke="#2e75c7" stroke-width="1">
<path d="M650.5 112V115.4M662.5 112V115.4M651.6 113.7H661.4M653.2 112.3L651.8 113.7L653.2 115.1M659.8 112.3L661.2 113.7L659.8 115.1"/>
</g>
<g fill="#fff" stroke="#7a7a7a" stroke-width="1">
<rect x="650.5" y="116.6" width="14" height="9"/>
<path d="M650.5 119.6H664.5M650.5 122.6H664.5M653.5 116.6V125.6M657.8 116.6V125.6M661.2 116.6V125.6" fill="none"/>
<path d="M651 127.2H656.5L657.5 126.2L658.5 127.2H664" fill="none" stroke-width="0.9"/>
</g>
<rect x="653.5" y="119.2" width="4.4" height="3.6" fill="#2e75c7"/>
<!-- ===== editing group ===== -->
<path d="M777 73H782L779.5 75.8Z M810 73H815L812.5 75.8Z M775.2 96.2H780.2L777.7 99Z M810 96.2H815L812.5 99Z M775.2 119.2H780.2L777.7 122Z" fill="#666"/>
<!-- sigma -->
<path d="M768.8 70V67.4H757.4L763.6 73.4L757.4 79.6H769V77" fill="none" stroke="#444" stroke-width="1.9" stroke-linejoin="miter"/>
<!-- sort & filter -->
<g font-family="Liberation Sans, sans-serif" font-weight="bold" font-size="8.6">
<text x="790.6" y="72.8" fill="#2e75c7">A</text>
<text x="790.6" y="81.6" fill="#8e44ad">Я</text>
</g>
<path d="M798.8 71.2H806.2L803.6 74.2V77.8H801.4V74.2Z" fill="#666"/>
<!-- fill -->
<rect x="756.5" y="89.8" width="13" height="14.2" fill="#fff" stroke="#777" stroke-width="1"/>
<rect x="756" y="89.3" width="14" height="3.2" fill="#666"/>
<path d="M763 94.4V101.6M759.8 98.6L763 101.8L766.2 98.6" fill="none" stroke="#2e75c7" stroke-width="1.7"/>
<!-- find -->
<circle cx="799.6" cy="95.4" r="3.7" fill="#fff" stroke="#2e75c7" stroke-width="1.6"/>
<path d="M796.8 98.2L791.8 102.6" stroke="#2e75c7" stroke-width="2.2" stroke-linecap="round"/>
<!-- eraser -->
<path d="M764.6 113.2L768.8 117L762.2 124.4L758 120.6Z" fill="#f08a9b"/>
<path d="M758 120.6L762.2 124.4L760.6 125.4L756.6 122Z" fill="#f6b4be"/>
<path d="M761.4 125.5H770" stroke="#666" stroke-width="1"/>
<!-- collapse ribbon -->
<path d="M843.6 146L847.5 142.2L851.4 146" fill="none" stroke="#555" stroke-width="1.8"/>
<!-- group dialog launchers -->
<g fill="none" stroke="#777" stroke-width="1">
<path d="M95.5 141.5H89.5V147.5"/><path d="M92.2 144.2L95.5 147.5M95.5 144.6V147.5H92.6"/>
<path d="M235.5 141.5H229.5V147.5"/><path d="M232.2 144.2L235.5 147.5M235.5 144.6V147.5H232.6"/>
<path d="M348.5 141.5H342.5V147.5"/><path d="M345.2 144.2L348.5 147.5M348.5 144.6V147.5H345.6"/>
<path d="M435.5 141.5H429.5V147.5"/><path d="M432.2 144.2L435.5 147.5M435.5 144.6V147.5H432.6"/>
</g>
<!-- ===== formula bar ===== -->
<path d="M122.5 171.5H124.5V173.5H122.5Z M122.5 175.5H124.5V177.5H122.5Z M122.5 179.5H124.5V181.5H122.5Z" fill="#b5b5b5"/>
<path d="M151.8 172L162 181M162 172L151.8 181" stroke="#c6c6c6" stroke-width="1.4" fill="none"/>
<path d="M187.4 176.6L191.4 180.4L199.6 171.8" stroke="#c6c6c6" stroke-width="1.9" fill="none"/>
<g font-family="Liberation Serif, serif" font-style="italic" fill="#555" stroke="#555" stroke-width="0.3">
<text x="224.6" y="179.6" font-size="14">f</text>
<text x="229.6" y="180.6" font-size="9.5">x</text>
</g>
<path d="M845.2 173.4L848.6 176.8L852 173.4" fill="none" stroke="#666" stroke-width="1.8"/>
<!-- ===== status bar view buttons ===== -->
<g fill="none" stroke="#737373" stroke-width="1">
<rect x="571.5" y="558.5" width="12" height="12" stroke-width="1.3"/>
<path d="M575.5 558.5V570.5M579.5 558.5V570.5M571.5 562.5H583.5M571.5 566.5H583.5" stroke-width="1.2"/>
<rect x="609.5" y="558.5" width="13" height="12" stroke-width="1.2"/>
<rect x="612.5" y="560.5" width="7" height="8"/>
<path d="M614 563.5H618M614 565.5H618" stroke-width="1"/>
<rect x="647.5" y="558.5" width="13" height="12" stroke-width="1.2"/>
<path d="M652.5 558.5V565.5M656.5 558.5V565.5M647.5 565.5H656.5"/>
</g>
<!-- flash fill button -->
<rect x="222.5" y="502.5" width="23" height="23" fill="#fff" stroke="#3f8a60" stroke-width="1"/>
<path d="M229.8 506H232.8L230.6 510H232.6L226.2 517L228.2 511.8H226.2Z" fill="#eec173"/>
<path d="M232.4 507.6H240.6V520.2H227.4V517.4" fill="none" stroke="#555" stroke-width="1"/>
<path d="M233.4 506.9H241V508.6H232.4Z" fill="#666"/>
<rect x="232" y="511.4" width="4" height="1.7" fill="#d24726"/>
<rect x="231.2" y="514.2" width="7.8" height="1.8" fill="#2e75c7"/>
<rect x="231.2" y="517.2" width="5.6" height="1.8" fill="#3a9a6a"/>
<!-- ===== watermark ===== -->
<g opacity="0.9">
<rect x="22.5" y="501" width="63" height="49.5" rx="5.5" fill="rgba(255,255,255,0.55)" stroke="#c2c2c2" stroke-width="1"/>
<path d="M42.5 555.8V553.3c0-1.4 0.9-2.3 2.3-2.3H59.7c1.4 0 2.3 0.9 2.3 2.3V555.8" fill="rgba(255,255,255,0.7)" stroke="#c4c4c4" stroke-width="1"/>
<rect x="26.5" y="504.5" width="55.5" height="42.3" rx="4" fill="rgba(255,255,255,0.35)" stroke="#c2c2c2" stroke-width="2.8"/>
<path d="M30.8 508.7L45.6 513.4L41.4 516.2L54.8 529.6L52 532.4L38.6 519L36.2 523Z" fill="#c0c0c0"/>
<path d="M31.9 536V543L28 539.5Z M57 536V543L61 539.5Z" fill="#dcdcdc"/>
</g>
<g font-family="Liberation Sans, sans-serif" font-size="30.6" stroke-linejoin="round" opacity="0.5">
<g transform="translate(93.3 537) scale(1.16 1)">
<text stroke="#fff" stroke-width="5.6" fill="#fff" vector-effect="non-scaling-stroke">OS</text>
<text stroke="#8a8a8a" stroke-width="3.4" fill="#8a8a8a" vector-effect="non-scaling-stroke">OS</text>
<text stroke="#f3738b" stroke-width="2" fill="#f3738b" vector-effect="non-scaling-stroke">OS</text>
</g>
</g>
<mask id="ringm" maskUnits="userSpaceOnUse" x="150" y="505" width="135" height="45">
<g font-family="Liberation Sans, sans-serif" font-size="29.4" stroke-linejoin="round" transform="translate(156 536.8) scale(1.38 1)">
<text stroke="#fff" stroke-width="4.2" fill="#fff" vector-effect="non-scaling-stroke">Helper</text>
<text stroke="#000" stroke-width="2.6" fill="#000" vector-effect="non-scaling-stroke">Helper</text>
</g>
</mask>
<g font-family="Liberation Sans, sans-serif" font-size="29.4" stroke-linejoin="round" opacity="0.45">
<g transform="translate(156 536.8) scale(1.38 1)">
<text stroke="#fff" stroke-width="6.2" fill="#fff" vector-effect="non-scaling-stroke">Helper</text>
</g>
</g>
<rect x="150" y="505" width="135" height="45" fill="#8c8c8c" opacity="0.6" mask="url(#ringm)"/>
</svg>

</body></html>
